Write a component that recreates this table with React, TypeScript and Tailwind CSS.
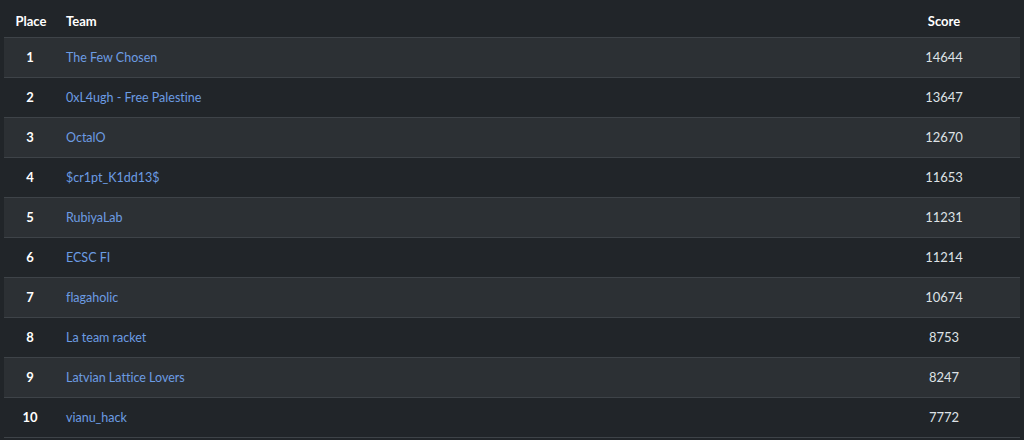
import React from "react";

const rows: [number, string, number][] = [
  [1, "The Few Chosen", 14644],
  [2, "0xL4ugh - Free Palestine", 13647],
  [3, "OctalO", 12670],
  [4, "$cr1pt_K1dd13$", 11653],
  [5, "RubiyaLab", 11231],
  [6, "ECSC FI", 11214],
  [7, "flagaholic", 10674],
  [8, "La team racket", 8753],
  [9, "Latvian Lattice Lovers", 8247],
  [10, "vianu_hack", 7772],
];

export default function App() {
  return (
    <div
      className="w-[1024px] h-[440px] overflow-hidden bg-[#212529] px-1 text-[12.5px] text-[#dee2e6] [font-variant-ligatures:none]"
      style={{ fontFamily: "Lato, 'Open Sans', sans-serif" }}
    >
      <div className="flex h-[37px] items-center pt-[6px] font-bold text-white text-[13px]">
        <div className="w-[54px] text-center">Place</div>
        <div className="flex-1 pl-[8px]">Team</div>
        <div className="w-[152px] text-center">Score</div>
      </div>
      {rows.map(([p, t, s], i) => (
        <div
          key={p}
          className={`flex h-[40px] items-center border-t border-[#3e4348] pt-[1px] ${
            i % 2 === 0 ? "bg-[#2c3034]" : "bg-[#212529]"
          }`}
        >
          <div className="w-[52px] text-center font-bold text-white text-[13px]">{p}</div>
          <div className="flex-1 pl-[10px] text-[#6c9ce3]">{t}</div>
          <div className="w-[152px] text-center text-[13px]">{s}</div>
        </div>
      ))}
      <div className="h-[40px] border-t border-[#3e4348]" />
    </div>
  );
}
